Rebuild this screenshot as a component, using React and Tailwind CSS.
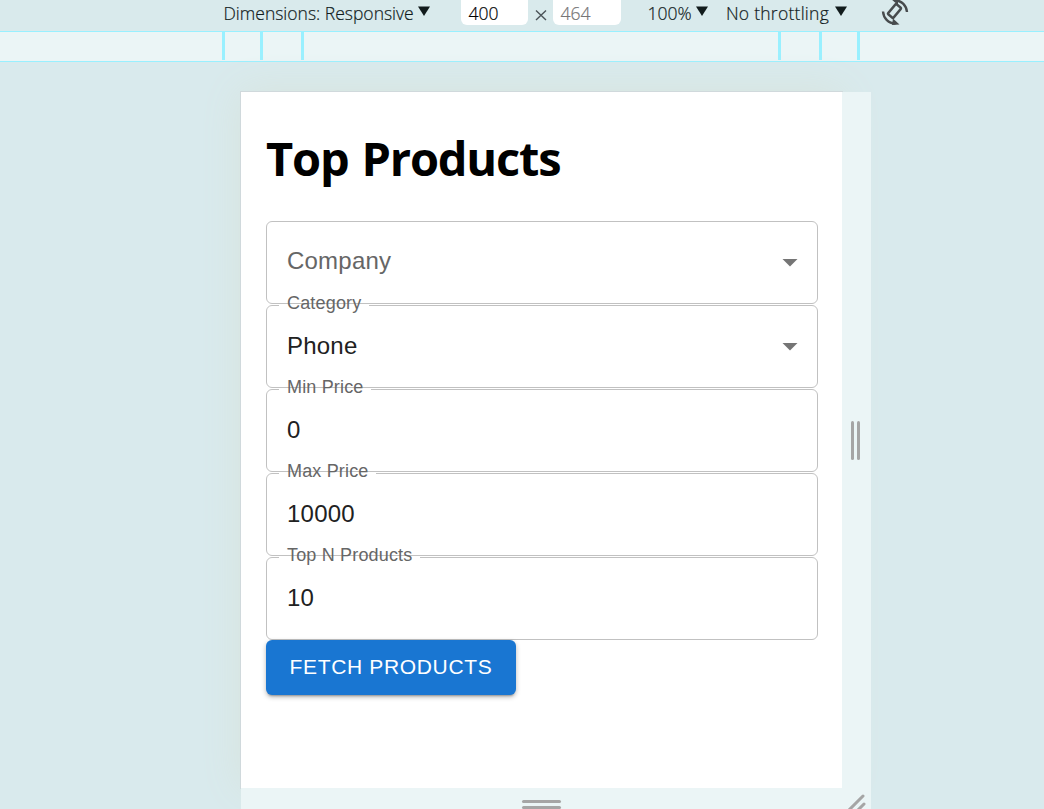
import React from 'react';

const fields = [
  { label: 'Company', placeholder: true, select: true },
  { label: 'Category', value: 'Phone', select: true, notch: 'w-[90px]' },
  { label: 'Min Price', value: '0', notch: 'w-[92px]' },
  { label: 'Max Price', value: '10000', notch: 'w-[97px]' },
  { label: 'Top N Products', value: '10', notch: 'w-[141px]' },
];

function Caret() {
  return (
    <svg width="12" height="10" viewBox="0 0 12 10" className="mt-[6px] shrink-0 fill-[#111b1c]">
      <path d="M0 0.500H12L6 10Z" />
    </svg>
  );
}

function Field({ label, value, placeholder, select, notch }) {
  return (
    <div className="relative mb-px h-[83px] w-[552px]">
      <fieldset className="absolute inset-0 rounded-md border border-[#c1c1c1] pl-3">
        {notch && <legend className={`h-0 ${notch}`} />}
      </fieldset>
      {!placeholder && (
        <label className="absolute -top-[14px] left-[21px] text-[18px] leading-6 tracking-[0.17px] whitespace-nowrap text-[#666]">
          {label}
        </label>
      )}
      <div className="flex h-full items-center justify-between pr-5 pb-[3px] pl-[21px] text-2xl leading-9 tracking-[0.22px]">
        <span className={placeholder ? 'text-[#666]' : 'pt-[2px] text-[#212121]'}>
          {placeholder ? label : value}
        </span>
        {select && (
          <svg width="16" height="8" viewBox="0 0 16 8" className="mt-[3px] fill-[#757575]">
            <path d="M0.500 0H15.500L8 7.500Z" />
          </svg>
        )}
      </div>
    </div>
  );
}

function Tick({ className }) {
  return <span className={`h-7 w-[3px] shrink-0 bg-[#99f0ff] ${className}`} />;
}

export default function App() {
  return (
    <div className="flex h-[809px] w-[1044px] flex-col overflow-hidden bg-[#d9eaed] font-['Liberation_Sans',sans-serif]">
      <header className="flex h-[31px] shrink-0 items-start bg-[#d9eaec] pl-[223px] font-['Open_Sans','Noto_Sans',sans-serif] text-[17.5px] leading-[26px] font-light whitespace-nowrap text-[#111b1c] [-webkit-text-stroke:0.2px]">
        <div className="flex w-[238px]">
          <span className="w-[195px] pl-[0.5px]">Dimensions: Responsive</span>
          <Caret />
        </div>
        <div className="h-[25px] w-[67px] rounded-b-md bg-white pl-[7.5px] text-black">400</div>
        <svg width="25" height="25" className="fill-none stroke-[#4b5358] stroke-[1.4]">
          <path d="M8 10.500L18 20M18 10.500L8 20" />
        </svg>
        <div className="h-[25px] w-[68px] rounded-b-md bg-white pl-[7.5px] text-[#757575]">464</div>
        <div className="ml-[26.5px] flex w-[78.5px]">
          <span className="w-[48.5px]">100%</span>
          <Caret />
        </div>
        <div className="flex w-[155px]">
          <span className="w-[109px] tracking-[0.25px]">No throttling</span>
          <Caret />
        </div>
        <svg width="28" height="28" viewBox="0 0 28 28" className="fill-none stroke-[#474b4d] stroke-[2.4]">
          <rect x="10" y="4.500" width="7" height="13" rx="0.800" transform="rotate(40 13.5 11)" />
          <path d="M2 11.500C2.500 18 7 23.200 14.500 23.500" />
          <path d="M26 12C25.500 5.500 21 0.500 13.500 0.200" />
          <path d="M12 18.500L18.500 24.500L11 25ZM17 5L10 -1L17 -2Z" className="fill-[#474b4d] stroke-none" />
        </svg>
      </header>
      <div className="flex h-[31px] shrink-0 border-y border-[#99f0ff] bg-[#ebf5f6]">
        <Tick className="ml-[222px]" />
        <Tick className="ml-[35px]" />
        <Tick className="ml-[38px]" />
        <Tick className="ml-[474px]" />
        <Tick className="ml-[38px]" />
        <Tick className="ml-[35px]" />
      </div>
      <main className="grid grow grid-cols-[601px_29px] grid-rows-[696px_21px] pt-[30px] pl-[241px]">
        <section className="bg-white pt-[39px] pl-[25px] shadow-[0_0_0_1px_#d0d9dc,0_0_38px_#d7e3dc]">
          <h1 className="h-[90px] font-['Open_Sans','Noto_Sans',sans-serif] text-[47px] leading-[55px] font-bold tracking-[-1.2px] whitespace-nowrap text-black [word-spacing:2px]">
            Top Products
          </h1>
          <form>
            {fields.map((field) => <Field key={field.label} {...field} />)}
            <button type="button" className="relative -mt-px block h-[55px] w-[250px] rounded-md bg-[#1976d2] pb-[2px] text-[21px] leading-9 tracking-[0.65px] whitespace-nowrap text-white shadow-[0_3px_2px_-2px_rgba(0,0,0,0.25),0_2px_5px_rgba(0,0,0,0.28)]">
              FETCH PRODUCTS
            </button>
          </form>
        </section>
        <div className="relative z-10 flex items-center justify-center gap-[3px] bg-[#ebf5f6]">
          <span className="h-[39px] w-[3px] rounded-full bg-[#a5a5a5]" />
          <span className="mr-[2px] h-[39px] w-[3px] rounded-full bg-[#a5a5a5]" />
        </div>
        <div className="relative z-10 flex flex-col items-center gap-[3px] bg-[#ebf5f6] pt-3">
          <span className="h-[3px] w-[39px] rounded-full bg-[#a5a5a5]" />
          <span className="h-[3px] w-[39px] rounded-full bg-[#a5a5a5]" />
        </div>
        <div className="relative z-10 bg-[#ebf5f6]">
          <svg width="29" height="21" className="fill-none stroke-[#a5a5a5] stroke-[3] [stroke-linecap:round]">
            <path d="M21 8L6 23M22 16L15 23" />
          </svg>
        </div>
      </main>
    </div>
  );
}
